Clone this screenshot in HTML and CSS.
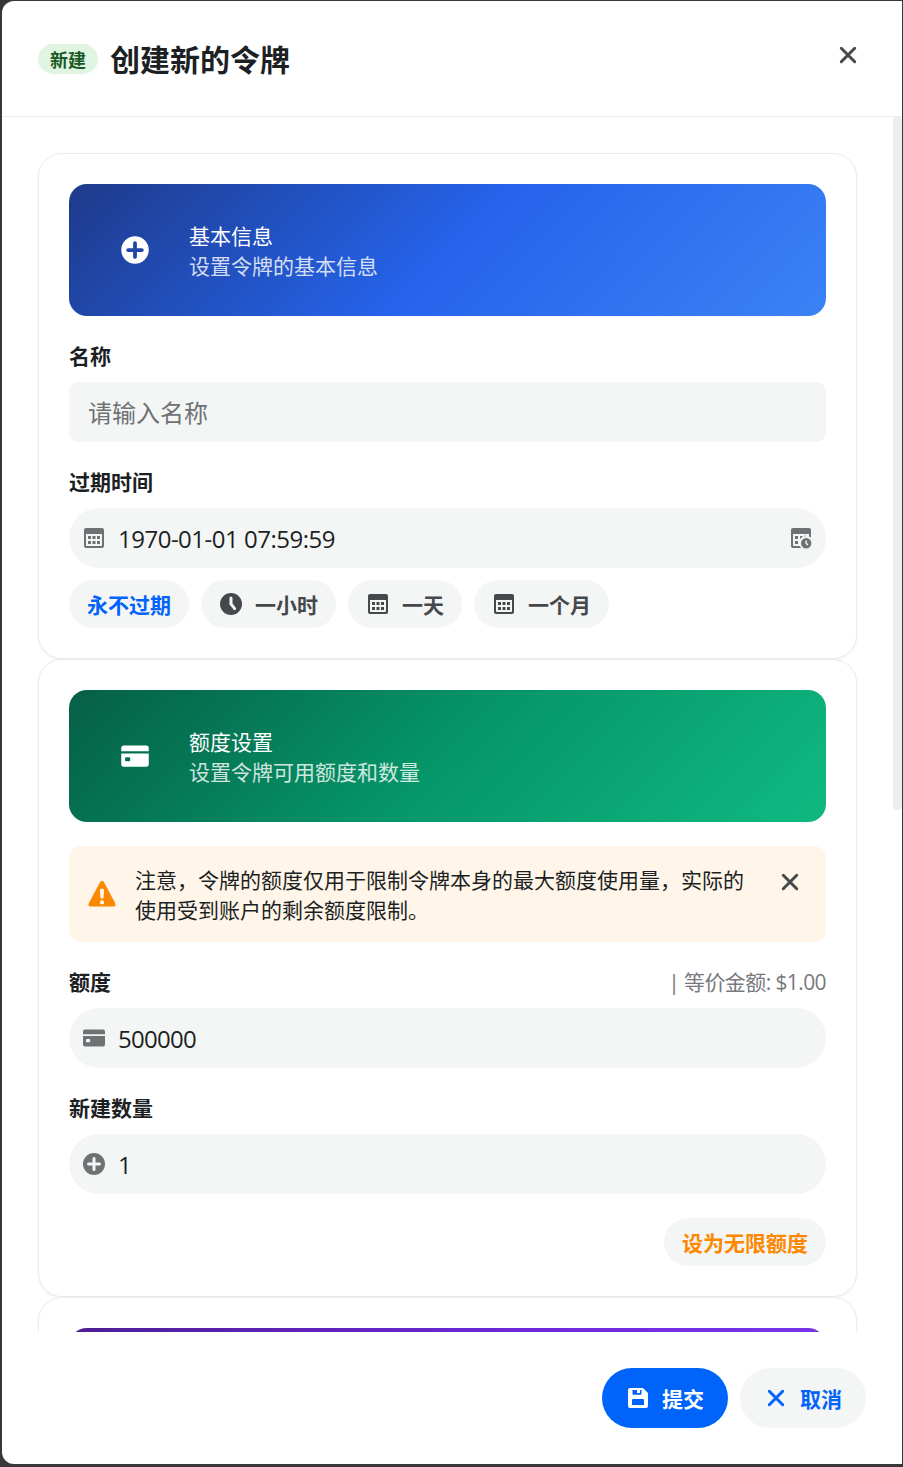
FILE: index.html
```html
<!doctype html>
<html lang="zh-CN">
<head>
    <meta charset="UTF-8">
    <meta name="viewport" content="width=device-width, initial-scale=1.0">
    <title>创建新的令牌</title>
    <link rel="stylesheet" href="styles.css">
</head>
<body>
    <svg class="sprite">
        <symbol id="icon-plus" viewBox="0 0 24 24">
            <path fill-rule="evenodd" d="M12 23a11 11 0 1 0 0-22 11 11 0 0 0 0 22Zm1.500-16.500v4h4a1.500 1.500 0 0 1 0 3h-4v4a1.500 1.500 0 0 1-3 0v-4h-4a1.500 1.500 0 0 1 0-3h4v-4a1.500 1.500 0 0 1 3 0Z"/>
        </symbol>
        <symbol id="icon-clock" viewBox="0 0 24 24">
            <path fill-rule="evenodd" d="M12 23a11 11 0 1 0 0-22 11 11 0 0 0 0 22Zm1.500-17v5.500l3.300 4.200a1.450 1.450 0 0 1-2.300 1.800l-3.600-4.600a1.500 1.500 0 0 1-.4-1V6a1.500 1.500 0 0 1 3 0Z"/>
        </symbol>
        <symbol id="icon-calendar" viewBox="0 0 24 24">
            <path fill-rule="evenodd" d="M4 2h16a2 2 0 0 1 2 2v16a2 2 0 0 1-2 2H4a2 2 0 0 1-2-2V4c0-1.100.900-2 2-2Zm0 6v11.200c0 .5.300.800.800.800h14.400c.5 0 .800-.300.800-.800V8H4Zm2 2h3v3H6v-3Zm4.500 0h3v3h-3v-3Zm4.500 0h3v3h-3v-3Zm-9 5h3v3H6v-3Zm4.500 0h3v3h-3v-3Zm4.500 0h3v3h-3v-3Z"/>
        </symbol>
        <symbol id="icon-calendar-clock" viewBox="0 0 24 24">
            <path fill-rule="evenodd" d="M4 2h16a2 2 0 0 1 2 2v7.500a7 7 0 0 0-2-1V8H4v11.200c0 .5.300.800.800.800h6.100a7 7 0 0 0 1.200 2H4a2 2 0 0 1-2-2V4c0-1.100.900-2 2-2Zm2 8h3v3H6v-3Zm5 0h3l-3 3v-3Zm4-.3h2.500l-2.500.8v-.8Zm-9 5.300h3v3H6v-3Zm11.200 7.500a5.200 5.200 0 1 0 0-10.400 5.200 5.200 0 0 0 0 10.400Zm.7-8v2.500l1.500 1.500-1 1-2-2v-3h1.500Z"/>
        </symbol>
        <symbol id="icon-card" viewBox="0 0 24 24">
            <path fill-rule="evenodd" d="M3 3.500h18a2 2 0 0 1 2 2v2.700H1V5.500a2 2 0 0 1 2-2ZM1 10h22v8.500a2 2 0 0 1-2 2H3a2 2 0 0 1-2-2V10Zm4 3a1 1 0 0 0-1 1v1.200a1 1 0 0 0 1 1h2.200a1 1 0 0 0 1-1V14a1 1 0 0 0-1-1H5Z"/>
        </symbol>
        <symbol id="icon-close" viewBox="0 0 24 24">
            <path d="M5.300 5.300l13.400 13.400M18.700 5.300L5.300 18.700" fill="none" stroke="currentColor" stroke-width="3" stroke-linecap="round"/>
        </symbol>
        <symbol id="icon-warning" viewBox="0 0 24 24">
            <path fill-rule="evenodd" d="M10.400 2.500c.7-1.300 2.500-1.300 3.200 0l9 16.900c.7 1.400 0 2.600-1.400 2.600H2.800c-1.400 0-2.100-1.200-1.400-2.600l9-16.900ZM10.300 9.200l.4 5.200a1.300 1.300 0 0 0 2.600 0l.4-5.200a1.700 1.700 0 0 0-3.400 0ZM12 17a1.700 1.700 0 1 0 0 3.400 1.700 1.700 0 0 0 0-3.400Z"/>
        </symbol>
        <symbol id="icon-save" viewBox="0 0 24 24">
            <path fill-rule="evenodd" d="M4 2h13l5 5v13a2 2 0 0 1-2 2H4a2 2 0 0 1-2-2V4c0-1.100.900-2 2-2Zm2.500 2v3.500c0 .8.500 1.300 1.300 1.300h6.400c.8 0 1.300-.5 1.300-1.300V4h-1.500v3h-3V4H6.500Zm.5 9a1 1 0 0 0-1 1v5h12v-5a1 1 0 0 0-1-1H7Z"/>
        </symbol>
    </svg>

    <div class="sheet">
        <header class="sheet-header">
            <span class="tag">新建</span>
            <h1>创建新的令牌</h1>
            <button type="button" class="close"><svg class="icon"><use href="#icon-close"/></svg></button>
        </header>

        <main class="sheet-body">
            <form class="cards">
                <section class="card">
                    <div class="banner banner--blue">
                        <svg class="icon icon--banner"><use href="#icon-plus"/></svg>
                        <div>
                            <p>基本信息</p>
                            <p class="banner-sub">设置令牌的基本信息</p>
                        </div>
                    </div>
                    <div class="label">名称</div>
                    <div class="input input--square"><span class="placeholder">请输入名称</span></div>
                    <div class="label">过期时间</div>
                    <div class="input">
                        <svg class="icon"><use href="#icon-calendar"/></svg>
                        <span class="value value--date">1970-01-01 07:59:59</span>
                        <svg class="icon"><use href="#icon-calendar-clock"/></svg>
                    </div>
                    <div class="presets">
                        <button type="button" class="btn btn--primary"><span>永不过期</span></button>
                        <button type="button" class="btn"><svg class="icon"><use href="#icon-clock"/></svg><span>一小时</span></button>
                        <button type="button" class="btn"><svg class="icon"><use href="#icon-calendar"/></svg><span>一天</span></button>
                        <button type="button" class="btn"><svg class="icon"><use href="#icon-calendar"/></svg><span>一个月</span></button>
                    </div>
                </section>

                <section class="card">
                    <div class="banner banner--green">
                        <svg class="icon icon--banner"><use href="#icon-card"/></svg>
                        <div>
                            <p>额度设置</p>
                            <p class="banner-sub">设置令牌可用额度和数量</p>
                        </div>
                    </div>
                    <div class="notice">
                        <svg class="icon icon--warning"><use href="#icon-warning"/></svg>
                        <p>注意，令牌的额度仅用于限制令牌本身的最大额度使用量，实际的使用受到账户的剩余额度限制。</p>
                        <button type="button" class="close"><svg class="icon"><use href="#icon-close"/></svg></button>
                    </div>
                    <div class="label">额度<span class="label-extra">| 等价金额: $1.00</span></div>
                    <div class="input">
                        <svg class="icon"><use href="#icon-card"/></svg>
                        <span class="value">500000</span>
                    </div>
                    <div class="label">新建数量</div>
                    <div class="input">
                        <svg class="icon"><use href="#icon-plus"/></svg>
                        <span class="value">1</span>
                    </div>
                    <div class="card-actions">
                        <button type="button" class="btn btn--warning"><span>设为无限额度</span></button>
                    </div>
                </section>

                <section class="card">
                    <div class="banner banner--purple"></div>
                </section>
            </form>
            <div class="scrollbar"></div>
        </main>

        <footer class="sheet-footer">
            <button type="button" class="btn btn--large btn--solid"><svg class="icon"><use href="#icon-save"/></svg><span>提交</span></button>
            <button type="button" class="btn btn--large btn--primary"><svg class="icon"><use href="#icon-close"/></svg><span>取消</span></button>
        </footer>
    </div>
</body>
</html>
```
FILE: styles.css
```css
* {
    box-sizing: border-box;
}

body {
    margin: 0;
    height: 1467px;
    padding: 1px 1px 3px 2px;
    overflow: hidden;
    background: #38383a;
    color: #1c1f23;
    font-family: "Open Sans", "Noto Sans CJK SC", sans-serif;
    font-size: 21px;
    line-height: 30px;
}

h1, p {
    margin: 0;
}

button {
    border: 0;
    padding: 0;
    background: none;
    font: inherit;
}

.sprite {
    display: none;
}

.icon {
    display: block;
    flex: none;
    width: 24px;
    height: 24px;
    fill: currentColor;
}

.sheet {
    display: flex;
    flex-direction: column;
    height: 1463px;
    border-radius: 12px 0 0 12px;
    background: #fff;
    overflow: hidden;
}

.sheet-header {
    display: flex;
    align-items: center;
    flex: none;
    height: 116px;
    padding: 0 42px 0 36px;
    border-bottom: 1px solid #ebecec;
}

.tag {
    height: 30px;
    padding: 1px 12px 0;
    border-radius: 15px;
    background: #e0f4e2;
    color: #1b5924;
    font-size: 18px;
    font-weight: 600;
}

h1 {
    margin-left: 12px;
    padding-top: 3px;
    font-size: 30px;
    font-weight: 700;
    line-height: 42px;
}

.close {
    color: #46494c;
}

.sheet-header .close {
    margin: 0 0 8px auto;
}

.sheet-body {
    display: flex;
    flex: none;
    height: 1215px;
    overflow: hidden;
}

.cards {
    flex: 1;
    padding: 36px 36px 0;
}

.card {
    padding: 30px;
    border: 1px solid #ebecec;
    border-radius: 24px;
    background: #fff;
    box-shadow: 0 1px 3px rgba(0, 0, 0, .06);
}

.banner {
    display: flex;
    align-items: center;
    height: 132px;
    padding-left: 51px;
    border-radius: 18px;
    color: #fff;
}

.banner p {
    padding-top: 1px;
    height: 30px;
}

.banner--blue {
    background: linear-gradient(135deg, #1e3a8a 0%, #2563eb 50%, #3b82f6 100%);
}

.banner--green {
    background: linear-gradient(135deg, #065f46 0%, #059669 50%, #10b981 100%);
}

.banner--purple {
    background: linear-gradient(135deg, #4c1d95 0%, #6d28d9 50%, #7c3aed 100%);
}

.banner-sub {
    opacity: .8;
}

.icon--banner {
    width: 30px;
    height: 30px;
    margin-right: 39px;
}

.label {
    display: flex;
    justify-content: space-between;
    margin: 25px 0 11px;
    font-weight: 700;
}

.label-extra {
    color: #77797c;
    font-weight: 400;
    letter-spacing: -.600px;
}

.input {
    display: flex;
    align-items: center;
    height: 60px;
    padding: 0 13px;
    border-radius: 30px;
    background: #f4f6f5;
    color: #6f7175;
    font-size: 24px;
}

.input--square {
    padding: 0 19px;
    border-radius: 9px;
}

.value {
    flex: 1;
    margin-left: 12px;
    color: #1c1f23;
    letter-spacing: -.700px;
}

.value--date {
    letter-spacing: -.500px;
}

.value, .placeholder, .btn span {
    padding-top: 2px;
}

.presets {
    display: flex;
    gap: 12px;
    margin-top: 12px;
}

.btn {
    display: flex;
    align-items: center;
    gap: 12px;
    height: 48px;
    padding: 0 18px;
    border-radius: 24px;
    background: #f4f6f5;
    color: #46494c;
    font-weight: 700;
}

.btn--primary {
    color: #0064fa;
}

.btn--warning {
    color: #fc8800;
}

.btn--large {
    height: 60px;
    padding: 0 24px;
    border-radius: 30px;
}

.btn--solid {
    background: #0064fa;
    color: #fff;
}

.notice {
    display: flex;
    height: 96px;
    margin-top: 24px;
    padding: 18px 24px 18px 18px;
    border-radius: 12px;
    background: #fff6e9;
}

.notice p {
    width: 612px;
    margin-left: 18px;
    padding-top: 1px;
}

.notice .close {
    align-self: flex-start;
    margin: 6px 0 0 auto;
}

.icon--warning {
    align-self: center;
    width: 30px;
    height: 30px;
    color: #fc8800;
}

.card-actions {
    display: flex;
    justify-content: flex-end;
    margin-top: 24px;
}

.scrollbar {
    width: 9px;
    height: 693px;
    border-radius: 4px;
    background: #ecedef;
}

.sheet-footer {
    display: flex;
    justify-content: flex-end;
    gap: 12px;
    padding: 36px;
}
```
